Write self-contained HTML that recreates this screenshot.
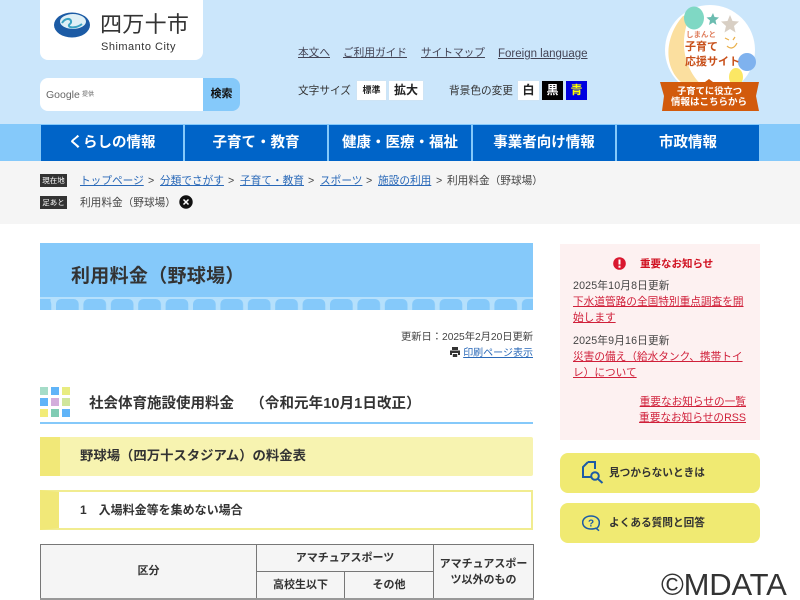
<!DOCTYPE html>
<html lang="ja"><head><meta charset="utf-8"><title>利用料金（野球場）</title>
<style>
html,body{margin:0;padding:0;background:#fff;width:800px;height:600px;overflow:hidden}
#w{width:800px;height:600px;overflow:hidden;position:relative;font-family:"Liberation Sans","Noto Sans CJK JP",sans-serif;color:#333;font-size:10.67px}
.a{position:absolute;white-space:nowrap;line-height:1}
.box{position:absolute}
a{color:inherit}
.nav{position:absolute;top:125px;height:36px;width:142px;background:#0064c8;color:#fff;font-size:14.5px;font-weight:bold;text-align:center;line-height:36px}
.btn{position:absolute;top:81px;background:#fff;text-align:center;font-weight:bold;color:#222;box-shadow:0 0 1px #ddd}
.bl{color:#2a69b8}
.rd{color:#d0203a}
td,th{border:1px solid #777;background:#f5f5f5;font-weight:bold;font-size:11px;text-align:center;padding:0;color:#333}
</style></head><body><div id="w">
<div class="box" style="left:0;top:0;width:800px;height:125px;background:#cbe6fb"></div>
<div class="box" style="left:0;top:124px;width:800px;height:37px;background:#85c9fa"></div>
<div class="box" style="left:40px;top:0;width:163px;height:60px;background:#fff;border-radius:0 0 8px 8px"></div>
<svg class="box" style="left:53px;top:12px" width="38" height="26" viewBox="0 0 38 26"><ellipse cx="19" cy="13" rx="18" ry="12.500" fill="#1c5ba5"/><ellipse cx="20" cy="9.500" rx="13" ry="7.500" fill="#dff0f6"/><path d="M9 11c3-5 8-5 9-2s-3 3-2 5 8 2 13-2" stroke="#3aa3c4" stroke-width="2" fill="none"/></svg>
<div class="a" style="left:100px;top:14px;font-size:22px;letter-spacing:.3px;color:#333">四万十市</div>
<div class="a" style="left:101px;top:42px;font-size:11px;letter-spacing:.5px;color:#333">Shimanto City</div>

<div class="box" style="left:40px;top:78px;width:163px;height:33px;background:#fff;border-radius:8px 0 0 8px"></div>
<div class="a" style="left:46px;top:90px;font-size:10.500px;color:#666">Google</div>
<div class="a" style="left:82px;top:92px;font-size:6px;color:#666">提供</div>
<div class="box" style="left:203px;top:78px;width:37px;height:33px;background:#85c9fa;border-radius:0 8px 8px 0;text-align:center;font-weight:bold;font-size:11px;line-height:33px;color:#111">検索</div>

<a class="a" style="left:298px;top:48px;color:#445"><u>本文へ</u></a>
<a class="a" style="left:343px;top:48px;color:#445"><u>ご利用ガイド</u></a>
<a class="a" style="left:421px;top:48px;color:#445"><u>サイトマップ</u></a>
<a class="a" style="left:498px;top:49px;color:#445;font-size:11.500px"><u>Foreign language</u></a>

<div class="a" style="left:298px;top:86px;color:#333">文字サイズ</div>
<div class="btn" style="left:357px;width:29px;height:19px;font-size:9px;line-height:18px">標準</div>
<div class="btn" style="left:389px;width:34px;height:19px;font-size:12px;line-height:18px">拡大</div>
<div class="a" style="left:449px;top:86px;color:#333">背景色の変更</div>
<div class="btn" style="left:518px;width:21px;height:19px;font-size:12px;line-height:19px">白</div>
<div class="btn" style="left:542px;width:21px;height:19px;font-size:12px;line-height:19px;background:#000;color:#fff">黒</div>
<div class="btn" style="left:566px;width:21px;height:19px;font-size:12px;line-height:19px;background:#0000e0;color:#ff0">青</div>

<svg class="box" style="left:655px;top:2px" width="110" height="112" viewBox="0 0 110 112">
<circle cx="55" cy="48" r="45" fill="#fff"/>
<path d="M28 14C10 34 8 64 26 80c8 5 16 6 24 6C30 70 22 40 36 12z" fill="#fbdf9f"/>
<ellipse cx="39" cy="16" rx="10" ry="11.500" fill="#7fd8c4"/>
<path d="M58 11l1.500 4 4.500.5-3.500 3 1 4.500-3.500-2.500-4 2.500 1-4.500-3.500-3 4.500-.5z" fill="#6bbcb0"/>
<path d="M75 13l2.500 6 6.500.5-5 4.500 1.500 6.500-5.500-3.500-5.500 3.500 1.500-6.500-5-4.500 6.500-.5z" fill="#d8cfc4"/>
<path d="M72 44c3 3 7 3 10-3M70 36l4 2M78 38l2-3" stroke="#eab04a" stroke-width="1.200" fill="none"/>
<ellipse cx="92" cy="60" rx="9" ry="9" fill="#7fb2ee"/>
<ellipse cx="81" cy="75" rx="7" ry="9" fill="#fbe764"/>
<path d="M5 80h45l4-3 4 3h46l-3 14 3 15H7l2-15z" fill="#d25a0c"/>
</svg>
<div class="a" style="left:686px;top:31px;font-size:7.500px;font-weight:bold;color:#e08060">しまんと</div>
<div class="a" style="left:685px;top:42px;font-size:11px;font-weight:bold;color:#c8501a">子育て</div>
<div class="a" style="left:685px;top:57px;font-size:11px;font-weight:bold;color:#c8501a">応援サイト</div>
<div class="a" style="left:677px;top:87px;font-size:9.300px;font-weight:bold;color:#fff">子育てに役立つ</div>
<div class="a" style="left:671px;top:98px;font-size:9.500px;font-weight:bold;color:#fff">情報はこちらから</div>

<div class="nav" style="left:41px">くらしの情報</div>
<div class="nav" style="left:185px">子育て・教育</div>
<div class="nav" style="left:329px">健康・医療・福祉</div>
<div class="nav" style="left:473px">事業者向け情報</div>
<div class="nav" style="left:617px">市政情報</div>

<div class="box" style="left:0;top:161px;width:800px;height:63px;background:#f5f5f5"></div>
<div class="box" style="left:40px;top:174px;width:27px;height:13px;background:#333;color:#fff;font-size:7.500px;line-height:13px;text-align:center">現在地</div>
<div class="box" style="left:40px;top:196px;width:27px;height:13px;background:#333;color:#fff;font-size:7.500px;line-height:13px;text-align:center">足あと</div>
<a class="a bl" style="left:80px;top:176px"><u>トップページ</u></a><span class="a" style="left:148px;top:176px;color:#444">&gt;</span>
<a class="a bl" style="left:160px;top:176px"><u>分類でさがす</u></a><span class="a" style="left:228px;top:176px;color:#444">&gt;</span>
<a class="a bl" style="left:240px;top:176px"><u>子育て・教育</u></a><span class="a" style="left:308px;top:176px;color:#444">&gt;</span>
<a class="a bl" style="left:320px;top:176px"><u>スポーツ</u></a><span class="a" style="left:366px;top:176px;color:#444">&gt;</span>
<a class="a bl" style="left:378px;top:176px"><u>施設の利用</u></a><span class="a" style="left:436px;top:176px;color:#444">&gt;</span>
<div class="a" style="left:447px;top:176px;color:#444">利用料金（野球場）</div>
<div class="a" style="left:80px;top:198px;color:#444">利用料金（野球場）</div>
<svg class="box" style="left:179px;top:195px" width="14" height="14" viewBox="0 0 14 14"><circle cx="7" cy="7" r="6.700" fill="#111"/><path d="M4.500 4.500l5 5M9.500 4.500l-5 5" stroke="#fff" stroke-width="1.500"/></svg>

<svg class="box" style="left:40px;top:243px" width="493" height="67" viewBox="0 0 493 67">
<defs><pattern id="p" x="16" y="56" width="27.400" height="20" patternUnits="userSpaceOnUse"><rect x="0" y="0" width="22.700" height="30" rx="5" fill="#85c9fa"/></pattern></defs>
<rect width="493" height="67" fill="#85c9fa"/>
<rect y="54" width="493" height="13" fill="#b5e0fc"/>
<rect y="56" width="493" height="11" fill="url(#p)"/>
<rect x="0" y="56" width="10.500" height="11" fill="#85c9fa"/>
</svg>
<div class="a" style="left:71px;top:267px;font-size:19px;font-weight:bold;color:#333;letter-spacing:.3px">利用料金（野球場）</div>

<div class="a" style="right:267px;top:333px;color:#444;font-size:10.300px;letter-spacing:-.05px">更新日：2025年2月20日更新</div>
<svg class="box" style="left:450px;top:347px" width="10" height="10" viewBox="0 0 10 10"><path d="M2 0h6v3H2zM0 3.500h10V8H8V6H2v2H0zM2.800 7h4.400v3H2.800z" fill="#333"/></svg>
<a class="a bl" style="right:267px;top:349px;font-size:10px"><u>印刷ページ表示</u></a>

<svg class="box" style="left:40px;top:387px" width="30" height="30" viewBox="0 0 30 30">
<rect width="8" height="8" fill="#a5dcc8"/><rect x="11" width="8" height="8" fill="#60b4f8"/><rect x="22" width="8" height="8" fill="#e8ec80"/>
<rect y="11" width="8" height="8" fill="#60b4f8"/><rect x="11" y="11" width="8" height="8" fill="#d3aedc"/><rect x="22" y="11" width="8" height="8" fill="#d0e69c"/>
<rect y="22" width="8" height="8" fill="#f2ec78"/><rect x="11" y="22" width="8" height="8" fill="#80ccb4"/><rect x="22" y="22" width="8" height="8" fill="#60b4f8"/></svg>
<div class="a" style="left:89px;top:397px;font-size:14.500px;font-weight:bold;color:#333;white-space:pre">社会体育施設使用料金　<span style="margin-left:9px;letter-spacing:.1px">（令和元年10月1日改正）</span></div>
<div class="box" style="left:40px;top:422px;width:493px;height:2px;background:#85c9fa"></div>

<div class="box" style="left:40px;top:437px;width:493px;height:39px;background:#f7f3b0;border-radius:2px"></div>
<div class="box" style="left:40px;top:437px;width:20px;height:39px;background:#f1e878"></div>
<div class="a" style="left:80px;top:449px;font-size:13.350px;font-weight:bold;color:#333">野球場（四万十スタジアム）の料金表</div>

<div class="box" style="left:40px;top:490px;width:493px;height:40px;box-sizing:border-box;background:#fff;border:2px solid #f1ec90;border-left:19px solid #f1e878"></div>
<div class="a" style="left:80px;top:504px;font-size:12px;font-weight:bold;color:#333;white-space:pre">1　入場料金等を集めない場合</div>

<table style="position:absolute;left:40px;top:544px;width:494px;border-collapse:collapse;table-layout:fixed;line-height:16px">
<colgroup><col style="width:216px"><col style="width:88px"><col style="width:89px"><col style="width:100px"></colgroup>
<tr style="height:27px"><td rowspan="2"><span style="position:relative;top:-1px">区分</span></td><td colspan="2">アマチュアスポーツ</td><td rowspan="2" style="padding:0 4px">アマチュアスポーツ以外のもの</td></tr>
<tr style="height:27px"><td>高校生以下</td><td>その他</td></tr>
</table>
<div class="box" style="left:40px;top:598px;width:494px;height:2px;background:#999"></div>

<div class="box" style="left:560px;top:244px;width:200px;height:196px;background:#fdf1f1"></div>
<svg class="box" style="left:613px;top:257px" width="13" height="13" viewBox="0 0 13 13"><circle cx="6.500" cy="6.500" r="6.300" fill="#d9182f"/><rect x="5.500" y="2.500" width="2" height="5" fill="#fff"/><rect x="5.500" y="8.700" width="2" height="2" fill="#fff"/></svg>
<div class="a" style="left:640px;top:259px;font-size:10.500px;font-weight:bold;color:#d01020">重要なお知らせ</div>
<div class="a" style="left:573px;top:281px;color:#444;letter-spacing:.15px">2025年10月8日更新</div>
<div class="a rd" style="left:573px;top:297px"><u>下水道管路の全国特別重点調査を開</u></div>
<div class="a rd" style="left:573px;top:313px"><u>始します</u></div>
<div class="a" style="left:573px;top:336px;color:#444;letter-spacing:.15px">2025年9月16日更新</div>
<div class="a rd" style="left:573px;top:352px"><u>災害の備え（給水タンク、携帯トイ</u></div>
<div class="a rd" style="left:573px;top:368px"><u>レ）について</u></div>
<div class="a rd" style="right:54px;top:397px"><u>重要なお知らせの一覧</u></div>
<div class="a rd" style="right:54px;top:413px"><u>重要なお知らせのRSS</u></div>

<div class="box" style="left:560px;top:453px;width:200px;height:40px;background:#f0ea72;border-radius:8px"></div>
<svg class="box" style="left:582px;top:461px" width="22" height="24" viewBox="0 0 22 24" fill="none" stroke="#1c5ba5" stroke-width="2"><path d="M6 1h7v7M10 16H1V6l5-5"/><circle cx="13" cy="15" r="3.800"/><path d="M16 18l4.500 4"/></svg>
<div class="a" style="left:609px;top:468px;font-weight:bold;color:#333">見つからないときは</div>
<div class="box" style="left:560px;top:503px;width:200px;height:40px;background:#f0ea72;border-radius:8px"></div>
<svg class="box" style="left:582px;top:515px" width="18" height="17" viewBox="0 0 18 17" fill="none" stroke="#1c5ba5" stroke-width="1.500"><path d="M15 13c1.500-1.200 2.300-3 2.300-5.500C17.300 3.500 13.500 1 9 1S.7 3.500.7 7.500 4.500 14 9 14c2 0 4-.2 5-.8l3 2.500"/><text x="9" y="11.500" font-size="10" font-weight="bold" fill="#1c5ba5" stroke="none" text-anchor="middle" font-family="Liberation Sans">?</text></svg>
<div class="a" style="left:609px;top:518px;font-weight:bold;color:#333">よくある質問と回答</div>

<div class="a" style="left:661px;top:569px;font-size:31px;color:#333;letter-spacing:-.2px">©MDATA</div>
</div></body></html>
